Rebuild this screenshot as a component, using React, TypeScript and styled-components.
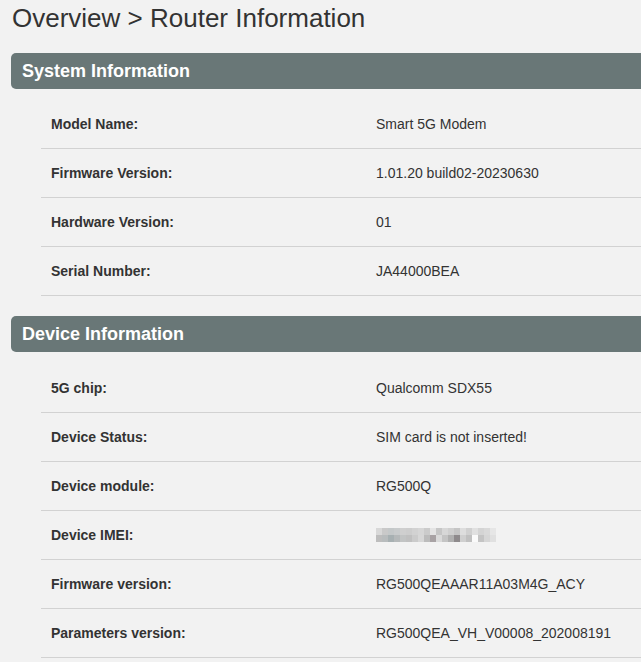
import React from 'react';
import styled, { createGlobalStyle } from 'styled-components';

const GlobalStyle = createGlobalStyle`
  html, body {
    margin: 0;
    padding: 0;
    background: #f2f2f2;
    overflow: hidden;
  }
  body {
    font-family: "Liberation Sans", Arial, sans-serif;
    color: #333;
  }
`;

const Page = styled.div`
  padding: 0 0 0 11px;
`;

const Title = styled.h1`
  margin: 0 0 0 1px;
  padding-top: 3px;
  height: 50px;
  font-size: 26px;
  font-weight: normal;
  line-height: 30px;
  color: #333;
`;

const Section = styled.section`
  margin-bottom: 20px;
`;

const SectionHeader = styled.div`
  height: 36px;
  display: flex;
  align-items: center;
  padding-left: 11px;
  background: #697777;
  border-radius: 5px 0 0 5px;
  color: #fff;
  font-size: 18px;
  font-weight: bold;
`;

const Table = styled.div<{ $gap: number }>`
  margin: ${p => p.$gap}px 0 0 30px;
`;

const Row = styled.div`
  display: grid;
  grid-template-columns: 325px 1fr;
  align-items: center;
  height: 48px;
  border-bottom: 1px solid #d2d2d2;
  font-size: 14px;
`;

const Label = styled.div`
  padding-left: 10px;
  font-weight: bold;
  color: #333;
`;

const Value = styled.div`
  padding-left: 10px;
  color: #333;
  white-space: nowrap;
`;

const Blur = styled.div`
  display: grid;
  grid-template-columns: repeat(20, 6px);
  grid-auto-rows: 7px;
  width: 120px;
`;

const BlurCell = styled.span<{ $c: string }>`
  background: ${p => p.$c};
`;

const blurTop = [
  '#d8d8d8', '#c9c9c9', '#c4c8c9', '#c8cbcc', '#cfcfcf', '#cdcdcd', '#d2d2d2', '#d6d6d6', '#cbcbcb', '#e4e4e4',
  '#c6c6c6', '#d7d7d7', '#cfcfcf', '#c5c5c5', '#dddddd', '#d0d0d0', '#e0e0e0', '#d4d4d4', '#d9d9d9', '#e6e6e6',
];
const blurBottom = [
  '#bdbdbd', '#b8bcbd', '#a7b0b2', '#b5b9ba', '#c2c4c4', '#c0c0c0', '#cbcbcb', '#d7d7d7', '#bcbcbc', '#a8a2a4',
  '#dadada', '#c4c4c4', '#b0b0b0', '#8e8a8c', '#cfcfcf', '#c0c0c0', '#fafafa', '#c4c4c4', '#d6d6d6', '#e0e0e0',
];

const BlurredText: React.FC = () => (
  <Blur>
    {[...blurTop, ...blurBottom].map((c, i) => (
      <BlurCell key={i} $c={c} />
    ))}
  </Blur>
);

type Item = { label: string; value: React.ReactNode };

const systemInfo: Item[] = [
  { label: 'Model Name:', value: 'Smart 5G Modem' },
  { label: 'Firmware Version:', value: '1.01.20 build02-20230630' },
  { label: 'Hardware Version:', value: '01' },
  { label: 'Serial Number:', value: 'JA44000BEA' },
];

const deviceInfo: Item[] = [
  { label: '5G chip:', value: 'Qualcomm SDX55' },
  { label: 'Device Status:', value: 'SIM card is not inserted!' },
  { label: 'Device module:', value: 'RG500Q' },
  { label: 'Device IMEI:', value: <BlurredText /> },
  { label: 'Firmware version:', value: 'RG500QEAAAR11A03M4G_ACY' },
  { label: 'Parameters version:', value: 'RG500QEA_VH_V00008_202008191' },
];

const InfoSection: React.FC<{ title: string; items: Item[]; gap: number }> = ({ title, items, gap }) => (
  <Section>
    <SectionHeader>{title}</SectionHeader>
    <Table $gap={gap}>
      {items.map(item => (
        <Row key={item.label}>
          <Label>{item.label}</Label>
          <Value>{item.value}</Value>
        </Row>
      ))}
    </Table>
  </Section>
);

const App: React.FC = () => (
  <>
    <GlobalStyle />
    <Page>
      <Title>Overview &gt; Router Information</Title>
      <InfoSection title="System Information" items={systemInfo} gap={11} />
      <InfoSection title="Device Information" items={deviceInfo} gap={12} />
    </Page>
  </>
);

export default App;
